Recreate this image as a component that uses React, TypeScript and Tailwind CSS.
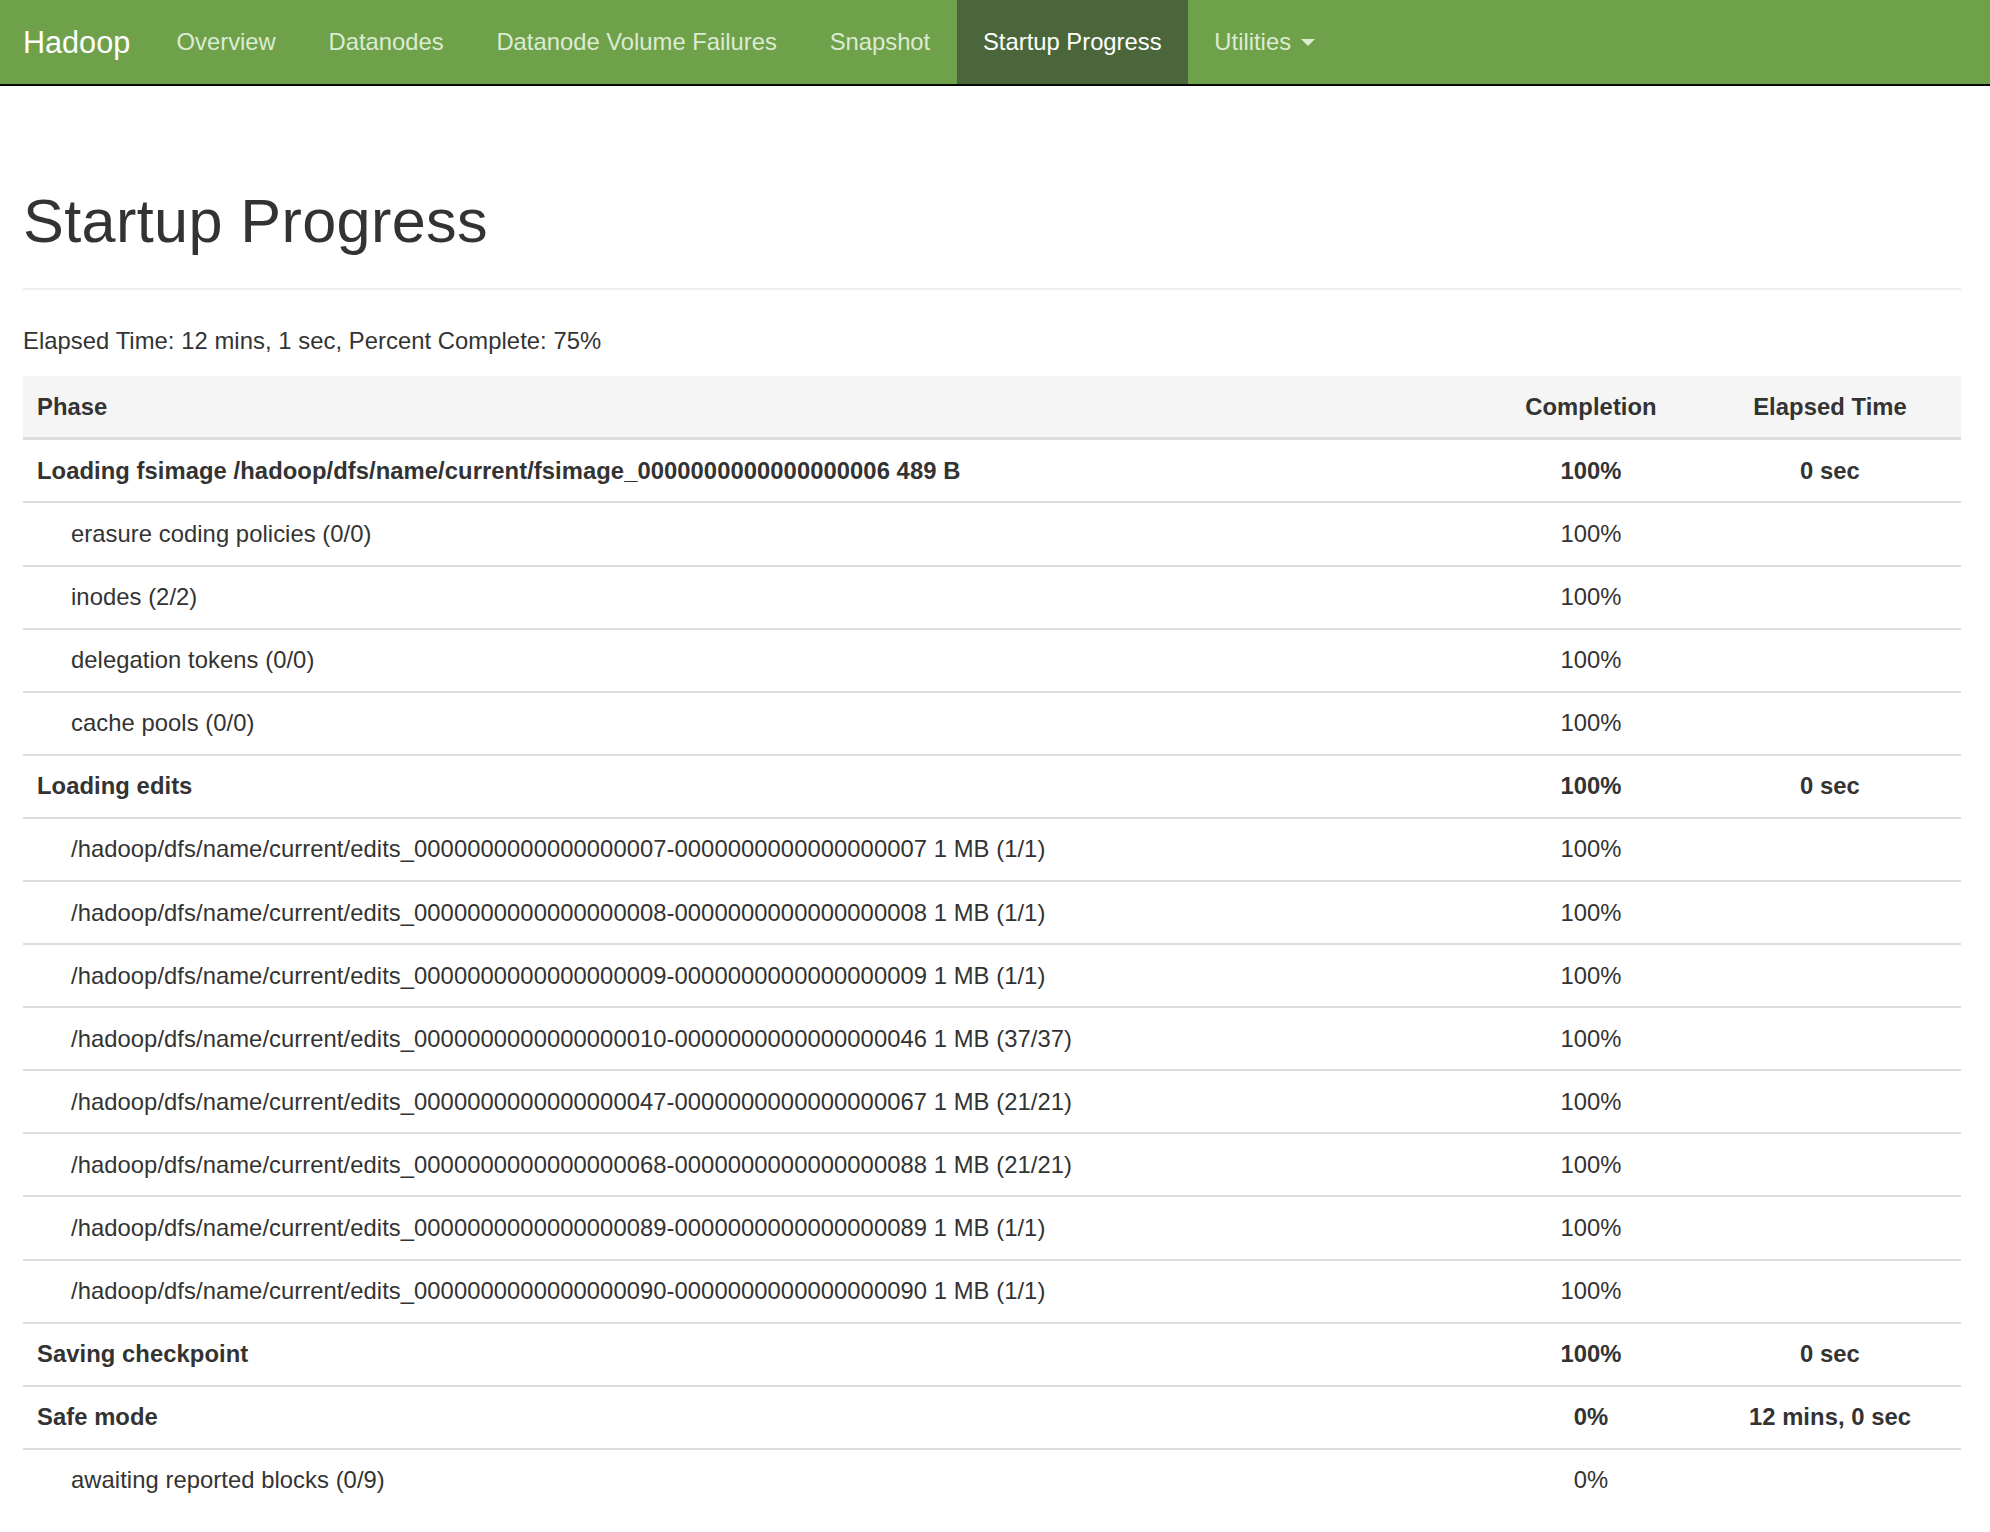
import React from 'react';

type Row = {
  phase: string;
  completion: string;
  elapsed?: string;
  sub?: boolean;
};

const rows: Row[] = [
  { phase: 'Loading fsimage /hadoop/dfs/name/current/fsimage_0000000000000000006 489 B', completion: '100%', elapsed: '0 sec' },
  { phase: 'erasure coding policies (0/0)', completion: '100%', sub: true },
  { phase: 'inodes (2/2)', completion: '100%', sub: true },
  { phase: 'delegation tokens (0/0)', completion: '100%', sub: true },
  { phase: 'cache pools (0/0)', completion: '100%', sub: true },
  { phase: 'Loading edits', completion: '100%', elapsed: '0 sec' },
  { phase: '/hadoop/dfs/name/current/edits_0000000000000000007-0000000000000000007 1 MB (1/1)', completion: '100%', sub: true },
  { phase: '/hadoop/dfs/name/current/edits_0000000000000000008-0000000000000000008 1 MB (1/1)', completion: '100%', sub: true },
  { phase: '/hadoop/dfs/name/current/edits_0000000000000000009-0000000000000000009 1 MB (1/1)', completion: '100%', sub: true },
  { phase: '/hadoop/dfs/name/current/edits_0000000000000000010-0000000000000000046 1 MB (37/37)', completion: '100%', sub: true },
  { phase: '/hadoop/dfs/name/current/edits_0000000000000000047-0000000000000000067 1 MB (21/21)', completion: '100%', sub: true },
  { phase: '/hadoop/dfs/name/current/edits_0000000000000000068-0000000000000000088 1 MB (21/21)', completion: '100%', sub: true },
  { phase: '/hadoop/dfs/name/current/edits_0000000000000000089-0000000000000000089 1 MB (1/1)', completion: '100%', sub: true },
  { phase: '/hadoop/dfs/name/current/edits_0000000000000000090-0000000000000000090 1 MB (1/1)', completion: '100%', sub: true },
  { phase: 'Saving checkpoint', completion: '100%', elapsed: '0 sec' },
  { phase: 'Safe mode', completion: '0%', elapsed: '12 mins, 0 sec' },
  { phase: 'awaiting reported blocks (0/9)', completion: '0%', sub: true },
];

const navLinks = ['Overview', 'Datanodes', 'Datanode Volume Failures', 'Snapshot', 'Startup Progress'];

const NavBar: React.FC = () => (
  <nav className="flex h-[86px] bg-[#6fa14b] border-b-2 border-[#080808]">
    <a className="flex items-center pl-[23px] pr-[20px] text-[30.6px] leading-[34px] text-white">Hadoop</a>
    <ul className="flex">
      {navLinks.map((l) => (
        <li key={l} className="flex">
          <a
            className={
              l === 'Startup Progress'
                ? 'flex items-center px-[26.4px] text-[23.8px] leading-[34px] bg-[#4b663a] text-white'
                : 'flex items-center px-[26.4px] text-[23.8px] leading-[34px] text-[#dcebd2]'
            }
          >
            {l}
          </a>
        </li>
      ))}
      <li className="flex">
        <a className="flex items-center px-[26.4px] text-[23.8px] leading-[34px] text-[#dcebd2]">
          Utilities
          <span className="inline-block ml-[10px] w-0 h-0 border-t-[7px] border-x-[7px] border-x-transparent border-t-[#dcebd2]" />
        </a>
      </li>
    </ul>
  </nav>
);

const App: React.FC = () => {
  return (
    <div className="min-h-screen bg-white text-[#333333] font-['Liberation_Sans',Arial,sans-serif]">
      <NavBar />
      <div className="pl-[23px] pr-[29px] tracking-[0.0035em]">
        <h1 className="mt-[102px] pb-[33px] border-b-2 border-[#eeeeee] text-[61.2px] leading-[1.1] font-normal tracking-[0.006em]">
          Startup Progress
        </h1>
        <p className="mt-[34px] mb-[18px] text-[23.8px] leading-[34px]">
          Elapsed Time: 12 mins, 1 sec, Percent Complete: 75%
        </p>
        <table className="w-full table-fixed border-collapse text-[23.8px] leading-[34px]">
          <colgroup>
            <col />
            <col className="w-[216px]" />
            <col className="w-[262px]" />
          </colgroup>
          <thead className="bg-[#f5f5f5]">
            <tr>
              <th className="px-[14px] py-[13.5px] text-left font-bold border-b-[3px] border-[#dddddd]">Phase</th>
              <th className="px-[14px] py-[13.5px] text-center font-bold border-b-[3px] border-[#dddddd]">Completion</th>
              <th className="px-[14px] py-[13.5px] text-center font-bold border-b-[3px] border-[#dddddd]">Elapsed Time</th>
            </tr>
          </thead>
          <tbody>
            {rows.map((r, i) => (
              <tr key={i} className={r.sub ? 'font-normal' : 'font-bold'}>
                <td
                  className={
                    r.sub
                      ? 'pl-[48px] pr-[14px] py-[13.55px] border-t-2 border-[#dddddd] whitespace-nowrap'
                      : 'px-[14px] py-[13.55px] border-t-2 border-[#dddddd] whitespace-nowrap'
                  }
                >
                  {r.phase}
                </td>
                <td className="px-[14px] py-[13.55px] text-center border-t-2 border-[#dddddd]">{r.completion}</td>
                <td className="px-[14px] py-[13.55px] text-center border-t-2 border-[#dddddd]">{r.elapsed ?? ''}</td>
              </tr>
            ))}
          </tbody>
        </table>
      </div>
    </div>
  );
};

export default App;
